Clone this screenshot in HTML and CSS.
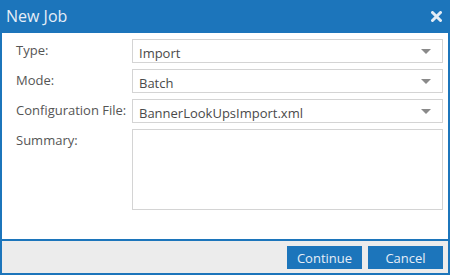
FILE: index.html
```html
<!DOCTYPE html>
<html lang="en">
<head>
    <meta charset="UTF-8">
    <title>New Job</title>
    <link rel="stylesheet" href="styles.css">
</head>
<body>
    <div class="dialog">
        <div class="dialog-header">
            <span class="dialog-title">New Job</span>
            <svg class="close-icon" width="11" height="11" viewBox="0 0 11 11">
                <path d="M1.5 1.5 L9.5 9.5 M9.5 1.5 L1.5 9.5" stroke="#e3ecf5" stroke-width="3" stroke-linecap="round"/>
            </svg>
        </div>
        <div class="dialog-body">
            <label class="field-label">Type:</label>
            <div class="select">Import<span class="arrow"></span></div>

            <label class="field-label">Mode:</label>
            <div class="select">Batch<span class="arrow"></span></div>

            <label class="field-label">Configuration File:</label>
            <div class="select">BannerLookUpsImport.xml<span class="arrow"></span></div>

            <label class="field-label">Summary:</label>
            <div class="summary"></div>
        </div>
        <div class="dialog-footer">
            <button class="btn">Continue</button>
            <button class="btn">Cancel</button>
        </div>
    </div>
</body>
</html>
```

FILE: styles.css
```css
body {
    margin: 0;
    font-family: "Open Sans", sans-serif;
    font-size: 13px;
    color: #555;
}

.dialog {
    width: 450px;
    height: 275px;
    box-sizing: border-box;
    border: 2px solid #1c75bb;
    border-top: 0;
    display: flex;
    flex-direction: column;
    background-color: #fff;
}

.dialog-header {
    height: 33px;
    margin: 0 -2px;
    padding: 0 8px 0 6px;
    background-color: #1c75bb;
    display: flex;
    align-items: center;
    justify-content: space-between;
}

.dialog-title {
    color: #e6eef7;
    font-size: 16px;
    margin-top: -1px;
}

.close-icon {
    display: block;
}

.dialog-body {
    flex: 1;
    padding: 6px 5px 0 14px;
    display: grid;
    grid-template-columns: 116px 1fr;
    grid-auto-rows: 24px;
    row-gap: 6px;
    align-content: start;
}

.field-label {
    padding-top: 3px;
    line-height: 16px;
}

.select {
    position: relative;
    border: 1px solid #d4d4d4;
    box-sizing: border-box;
    padding: 4px 6px 0;
    line-height: 18px;
    color: #4a4a4a;
}

.arrow {
    position: absolute;
    right: 11px;
    top: 9px;
    width: 0;
    height: 0;
    border-left: 5px solid transparent;
    border-right: 5px solid transparent;
    border-top: 5px solid #8a8a8a;
}

.summary {
    grid-row: span 3;
    height: 81px;
    border: 1px solid #d4d4d4;
    box-sizing: border-box;
}

.dialog-footer {
    border-top: 2px solid #1c75bb;
    background-color: #ececec;
    height: 34px;
    display: flex;
    justify-content: flex-end;
    align-items: flex-start;
    gap: 6px;
    padding: 5px 5px 0 0;
    box-sizing: border-box;
}

.btn {
    width: 75px;
    height: 23px;
    border: none;
    background-color: #1c75bb;
    color: #e6eef7;
    font-family: "Open Sans", sans-serif;
    font-size: 13px;
    padding: 0;
    cursor: pointer;
}
```
